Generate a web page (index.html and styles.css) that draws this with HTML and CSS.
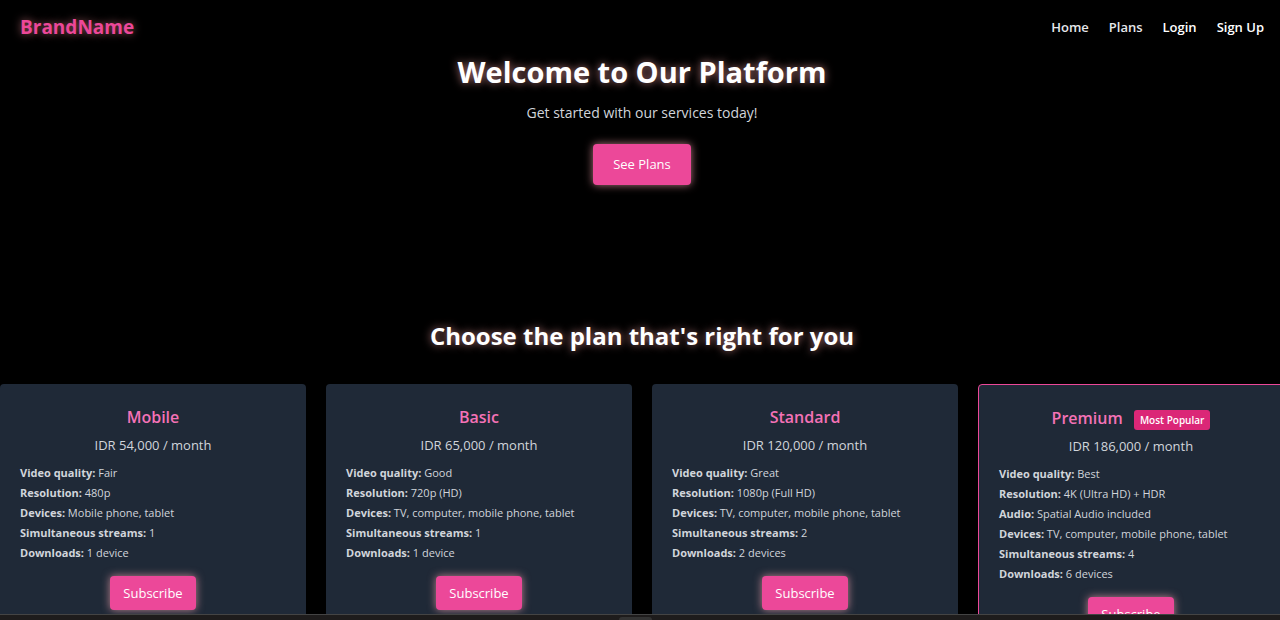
FILE: index.html
```html
<!DOCTYPE html>
<html lang="en">
<head>
<meta charset="utf-8">
<meta name="viewport" content="width=device-width, initial-scale=1">
<title>BrandName</title>
<link rel="stylesheet" href="styles.css">
</head>
<body>
<div class="viewport">
  <div class="page">
    <header class="site-header">
      <a class="brand" href="#">BrandName</a>
      <nav class="site-nav">
        <a class="nav-link" href="#">Home</a>
        <a class="nav-link" href="#plans">Plans</a>
        <a class="nav-link nav-link-strong" href="#">Login</a>
        <a class="nav-link nav-link-strong" href="#">Sign Up</a>
      </nav>
    </header>
    <section class="hero">
      <h1 class="hero-title">Welcome to Our Platform</h1>
      <p class="hero-text">Get started with our services today!</p>
      <button class="button button-large" type="button">See Plans</button>
    </section>
    <section class="plans" id="plans">
      <h2 class="plans-title">Choose the plan that's right for you</h2>
      <div class="plan-grid">
        <article class="plan">
          <h3 class="plan-name">Mobile</h3>
          <p class="plan-price">IDR 54,000 / month</p>
          <ul class="features">
            <li><strong>Video quality:</strong> Fair</li>
            <li><strong>Resolution:</strong> 480p</li>
            <li><strong>Devices:</strong> Mobile phone, tablet</li>
            <li><strong>Simultaneous streams:</strong> 1</li>
            <li><strong>Downloads:</strong> 1 device</li>
          </ul>
          <button class="button" type="button">Subscribe</button>
        </article>
        <article class="plan">
          <h3 class="plan-name">Basic</h3>
          <p class="plan-price">IDR 65,000 / month</p>
          <ul class="features">
            <li><strong>Video quality:</strong> Good</li>
            <li><strong>Resolution:</strong> 720p (HD)</li>
            <li><strong>Devices:</strong> TV, computer, mobile phone, tablet</li>
            <li><strong>Simultaneous streams:</strong> 1</li>
            <li><strong>Downloads:</strong> 1 device</li>
          </ul>
          <button class="button" type="button">Subscribe</button>
        </article>
        <article class="plan">
          <h3 class="plan-name">Standard</h3>
          <p class="plan-price">IDR 120,000 / month</p>
          <ul class="features">
            <li><strong>Video quality:</strong> Great</li>
            <li><strong>Resolution:</strong> 1080p (Full HD)</li>
            <li><strong>Devices:</strong> TV, computer, mobile phone, tablet</li>
            <li><strong>Simultaneous streams:</strong> 2</li>
            <li><strong>Downloads:</strong> 2 devices</li>
          </ul>
          <button class="button" type="button">Subscribe</button>
        </article>
        <article class="plan plan-featured">
          <h3 class="plan-name">Premium <span class="badge">Most Popular</span></h3>
          <p class="plan-price">IDR 186,000 / month</p>
          <ul class="features">
            <li><strong>Video quality:</strong> Best</li>
            <li><strong>Resolution:</strong> 4K (Ultra HD) + HDR</li>
            <li><strong>Audio:</strong> Spatial Audio included</li>
            <li><strong>Devices:</strong> TV, computer, mobile phone, tablet</li>
            <li><strong>Simultaneous streams:</strong> 4</li>
            <li><strong>Downloads:</strong> 6 devices</li>
          </ul>
          <button class="button" type="button">Subscribe</button>
        </article>
      </div>
    </section>
  </div>
</div>
<div class="dock"><span class="dock-handle"></span></div>
</body>
</html>
```

FILE: styles.css
```css
* {
  box-sizing: border-box;
}

body {
  display: flex;
  flex-direction: column;
  height: 100vh;
  margin: 0;
  overflow: hidden;
  background: #000;
  color: #d1d5db;
  font-family: "Segoe UI", "Open Sans", "Noto Sans", sans-serif;
  font-size: 13px;
  line-height: 20px;
}

h1, h2, h3, p, ul {
  margin: 0;
  padding: 0;
}

.viewport {
  flex: 1;
  min-height: 0;
  overflow: hidden;
}

/* The page is slightly wider than the window and runs under its right edge. */
.page {
  width: calc(100% + 4px);
}

.site-header {
  display: flex;
  align-items: center;
  justify-content: space-between;
  padding: 12px 20px;
}

.brand {
  color: #ec4899;
  font-size: 19px;
  font-weight: 700;
  line-height: 30px;
  text-decoration: none;
  text-shadow: 0 0 8px rgba(255, 150, 160, 0.6);
}

.site-nav {
  display: flex;
  gap: 20px;
}

.nav-link {
  color: #e5e7eb;
  font-weight: 600;
  text-decoration: none;
}

.nav-link-strong {
  color: #fff;
}

.hero {
  display: flex;
  flex-direction: column;
  align-items: center;
  padding-bottom: 133px;
}

.hero-title,
.plans-title {
  color: #fff;
  font-weight: 700;
  text-align: center;
  text-shadow: 0 0 8px rgba(255, 170, 170, 0.7);
}

.hero-title {
  margin-bottom: 12px;
  font-size: 29px;
  line-height: 36px;
}

.hero-text {
  margin-bottom: 20px;
  font-size: 14px;
  line-height: 22px;
}

.button {
  padding: 7px 13px;
  border: 0;
  border-radius: 4px;
  background: #ec4899;
  box-shadow: 0 0 8px rgba(255, 170, 180, 0.7);
  color: #fff;
  font: inherit;
}

.button-large {
  padding: 10px 20px;
  line-height: 21px;
}

.plans-title {
  margin-bottom: 30px;
  font-size: 24px;
  line-height: 36px;
}

.plan-grid {
  display: grid;
  grid-template-columns: repeat(4, minmax(0, 1fr));
  gap: 20px;
}

.plan {
  display: flex;
  flex-direction: column;
  align-items: center;
  padding: 20px;
  border-radius: 4px;
  background: #1f2937;
}

.plan-featured {
  border: 1px solid #ec4899;
}

.plan-name {
  margin-bottom: 5px;
  color: #f472b6;
  font-size: 16px;
  font-weight: 600;
  line-height: 26px;
}

.badge {
  display: inline-block;
  margin-left: 7px;
  padding: 2px 6px;
  border-radius: 3px;
  background: #db2777;
  color: #fff;
  font-size: 10px;
  line-height: 16px;
  vertical-align: middle;
}

.plan-price {
  margin-bottom: 8px;
}

.features {
  align-self: stretch;
  margin-bottom: 13px;
  font-size: 11px;
  list-style: none;
}

.features strong {
  font-weight: 700;
}

.dock {
  display: flex;
  align-items: flex-end;
  justify-content: center;
  height: 6px;
  border-top: 1px solid #444;
  background: #1e1c1c;
}

.dock-handle {
  width: 33px;
  height: 3px;
  margin-right: 10px;
  border-radius: 3px 3px 0 0;
  background: #333;
}
```
